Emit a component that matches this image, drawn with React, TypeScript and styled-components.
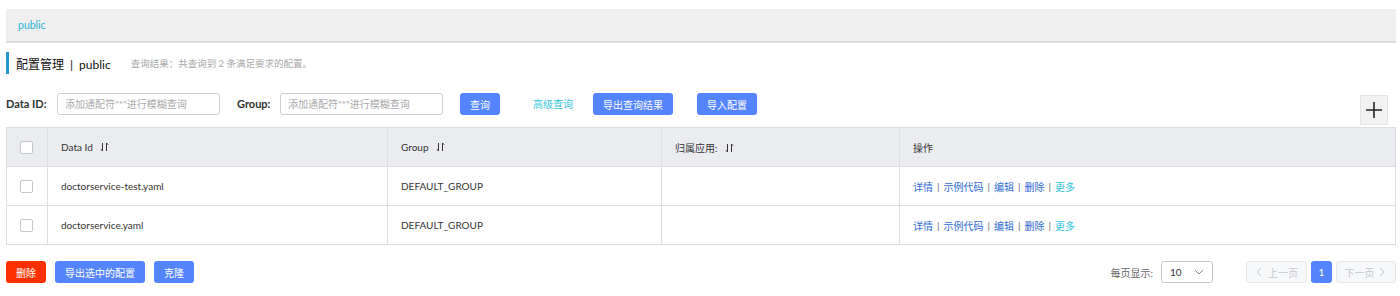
import React from 'react';
import styled, { createGlobalStyle } from 'styled-components';

const GlobalStyle = createGlobalStyle`
  html, body {
    margin: 0;
    padding: 0;
    background: #fff;
    font-family: Lato, "Noto Sans CJK SC", sans-serif;
    color: #333;
  }
  * { box-sizing: border-box; }
`;

type Row = { dataId: string; group: string; app: string };

const rows: Row[] = [
  { dataId: 'doctorservice-test.yaml', group: 'DEFAULT_GROUP', app: '' },
  { dataId: 'doctorservice.yaml', group: 'DEFAULT_GROUP', app: '' },
];

const SortIcon = () => (
  <svg width="9" height="10" viewBox="0 0 9 10" fill="none" stroke="#333" strokeWidth="1">
    <path d="M2.5 1v8M0.8 7.2l1.7 1.8" />
    <path d="M6.5 9V1M6.5 1l1.7 1.8" />
  </svg>
);

const Chevron = ({ dir }: { dir: 'left' | 'right' | 'down' }) => {
  const d = dir === 'left' ? 'M6 1L2 5l4 4' : dir === 'right' ? 'M2 1l4 4-4 4' : 'M1 3l4 4 4-4';
  return (
    <svg width="10" height="10" viewBox="0 0 10 10" fill="none" stroke="currentColor" strokeWidth="1">
      <path d={d} />
    </svg>
  );
};

const App = () => {
  return (
    <>
      <GlobalStyle />
      <Page>
        <Breadcrumb>
          <BreadcrumbLink>public</BreadcrumbLink>
        </Breadcrumb>

        <TitleRow>
          <Title>
            配置管理<TitleSep>|</TitleSep>public
          </Title>
          <ResultHint>查询结果：共查询到 2 条满足要求的配置。</ResultHint>
        </TitleRow>

        <SearchRow>
          <Label>Data ID:</Label>
          <Input placeholder={'添加通配符"*"进行模糊查询'} />
          <Label $gap>Group:</Label>
          <Input placeholder={'添加通配符"*"进行模糊查询'} />
          <Button $ml={17}>查询</Button>
          <TextLink>高级查询</TextLink>
          <Button $ml={20}>导出查询结果</Button>
          <Button $ml={24}>导入配置</Button>
          <AddButton>
            <svg width="18" height="18" viewBox="0 0 18 18" stroke="#222" strokeWidth="1.6">
              <path d="M9 1v16M1 9h16" />
            </svg>
          </AddButton>
        </SearchRow>

        <Table>
          <thead>
            <tr>
              <Th $w={41}>
                <Check />
              </Th>
              <Th $w={340}>
                Data Id <SortIcon />
              </Th>
              <Th $w={274}>
                Group <SortIcon />
              </Th>
              <Th $w={238}>
                归属应用: <SortIcon />
              </Th>
              <Th>操作</Th>
            </tr>
          </thead>
          <tbody>
            {rows.map((r) => (
              <tr key={r.dataId}>
                <Td>
                  <Check />
                </Td>
                <Td>{r.dataId}</Td>
                <Td>{r.group}</Td>
                <Td>{r.app}</Td>
                <Td>
                  <Actions>
                    <ActionLink>详情</ActionLink>
                    <Pipe>|</Pipe>
                    <ActionLink>示例代码</ActionLink>
                    <Pipe>|</Pipe>
                    <ActionLink>编辑</ActionLink>
                    <Pipe>|</Pipe>
                    <ActionLink>删除</ActionLink>
                    <Pipe>|</Pipe>
                    <ActionLink $more>更多</ActionLink>
                  </Actions>
                </Td>
              </tr>
            ))}
          </tbody>
        </Table>

        <Footer>
          <FooterButtons>
            <Button $danger>删除</Button>
            <Button>导出选中的配置</Button>
            <Button>克隆</Button>
          </FooterButtons>
          <Pager>
            <PageSizeLabel>每页显示:</PageSizeLabel>
            <Select>
              <span>10</span>
              <Chevron dir="down" />
            </Select>
            <PageNav $ml={29} $w={61} disabled>
              <Chevron dir="left" />
              上一页
            </PageNav>
            <PageNum>1</PageNum>
            <PageNav $w={60} disabled>
              下一页
              <Chevron dir="right" />
            </PageNav>
          </Pager>
        </Footer>
      </Page>
    </>
  );
};

const Page = styled.div`
  width: 1400px;
  padding: 9px 4px 0 6px;
`;

const Breadcrumb = styled.div`
  height: 34px;
  display: flex;
  align-items: center;
  padding-left: 12px;
  background: #efefef;
  border-bottom: 2px solid #dcdcdc;
`;

const BreadcrumbLink = styled.span`
  font-size: 10.5px;
  color: #27b5d6;
`;

const TitleRow = styled.div`
  display: flex;
  align-items: center;
  height: 22px;
  margin-top: 9px;
  border-left: 3px solid #2196d3;
  padding-left: 7px;
`;

const Title = styled.div`
  font-size: 12px;
  color: #111;
`;

const TitleSep = styled.span`
  margin: 0 6px;
`;

const ResultHint = styled.span`
  margin-left: 20px;
  font-size: 9.5px;
  color: #a8a8a8;
`;

const SearchRow = styled.div`
  display: flex;
  align-items: flex-start;
  margin-top: 19px;
`;

const Label = styled.label<{ $gap?: boolean }>`
  height: 22px;
  line-height: 22px;
  font-size: 11px;
  font-weight: 700;
  color: #333;
  margin-left: ${(p) => (p.$gap ? '17px' : '0')};
  width: ${(p) => (p.$gap ? '43px' : '51px')};
`;

const Input = styled.input`
  width: 163px;
  height: 22px;
  border: 1px solid #cfcfcf;
  border-radius: 3px;
  padding: 0 7px;
  font-size: 10px;
  font-family: inherit;
  outline: none;
  &::placeholder {
    color: #aaa;
  }
`;

const Button = styled.button<{ $ml?: number; $danger?: boolean }>`
  margin-left: ${(p) => p.$ml ?? 0}px;
  height: 22px;
  padding: 0 10px;
  border: none;
  border-radius: 3px;
  background: ${(p) => (p.$danger ? '#ff3000' : '#5584ff')};
  color: #fff;
  font-size: 10px;
  font-family: inherit;
  cursor: pointer;
`;

const TextLink = styled.a`
  margin-left: 33px;
  height: 22px;
  line-height: 22px;
  font-size: 10px;
  color: #33c4dd;
`;

const AddButton = styled.div`
  margin-left: auto;
  margin-right: 8px;
  margin-top: 2px;
  width: 28px;
  height: 30px;
  display: flex;
  align-items: center;
  justify-content: center;
  background: #f2f2f2;
  border: 1px solid #e4e4e4;
`;

const Table = styled.table`
  width: 1390px;
  margin-top: 2px;
  border-collapse: collapse;
  border: 1px solid #dcdee3;
  font-size: 10px;
  color: #333;
`;

const Th = styled.th<{ $w?: number }>`
  width: ${(p) => (p.$w ? `${p.$w}px` : 'auto')};
  height: 39px;
  background: #ebecf0;
  text-align: left;
  font-weight: 400;
  padding: 0 0 0 13px;
  border-right: 1px solid #dcdee3;
  border-bottom: 1px solid #dcdee3;
  svg {
    margin-left: 5px;
    vertical-align: -1px;
  }
`;

const Td = styled.td`
  height: 39px;
  padding: 0 0 0 13px;
  border-right: 1px solid #dcdee3;
  border-bottom: 1px solid #dcdee3;
`;

const Check = styled.span`
  display: inline-block;
  width: 13px;
  height: 13px;
  border: 1px solid #c4c6cf;
  border-radius: 2px;
  background: #fff;
  vertical-align: middle;
`;

const Actions = styled.div`
  display: flex;
  align-items: center;
  gap: 4px;
`;

const ActionLink = styled.a<{ $more?: boolean }>`
  color: ${(p) => (p.$more ? '#33c4dd' : '#2f6bd1')};
  cursor: pointer;
`;

const Pipe = styled.span`
  color: #666;
`;

const Footer = styled.div`
  display: flex;
  align-items: center;
  justify-content: space-between;
  margin-top: 16px;
  height: 22px;
`;

const FooterButtons = styled.div`
  display: flex;
  gap: 9px;
`;

const Pager = styled.div`
  display: flex;
  align-items: center;
  gap: 4px;
`;

const PageSizeLabel = styled.span`
  font-size: 10px;
  color: #666;
  margin-right: 4px;
`;

const Select = styled.div`
  width: 52px;
  height: 22px;
  border: 1px solid #c4c6cf;
  border-radius: 3px;
  display: flex;
  align-items: center;
  justify-content: space-between;
  padding: 0 8px 0 8px;
  font-size: 10px;
  color: #333;
  svg {
    color: #888;
  }
`;

const PageNav = styled.button<{ $ml?: number; $w: number }>`
  margin-left: ${(p) => p.$ml ?? 0}px;
  width: ${(p) => p.$w}px;
  height: 22px;
  display: flex;
  align-items: center;
  justify-content: center;
  gap: 3px;
  border: 1px solid #e6e7eb;
  border-radius: 3px;
  background: #f7f8fa;
  color: #c4c6cf;
  font-size: 10px;
  font-family: inherit;
`;

const PageNum = styled.button`
  width: 21px;
  height: 22px;
  border: none;
  border-radius: 3px;
  background: #5584ff;
  color: #fff;
  font-size: 10px;
  font-family: inherit;
`;

export default App;
